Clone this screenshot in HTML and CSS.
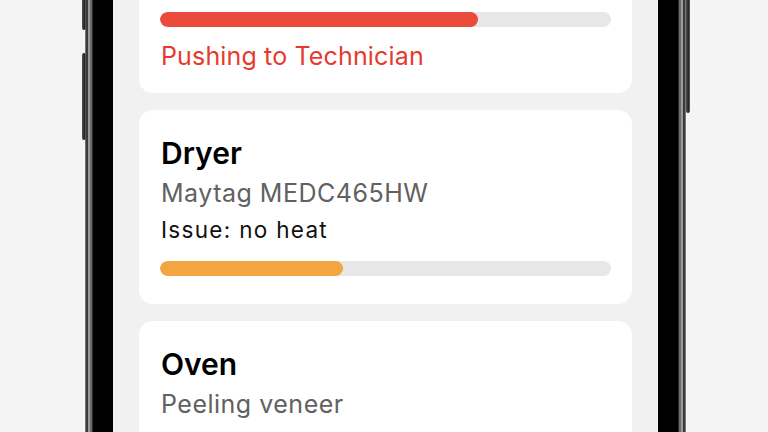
FILE: index.html
```html
<!DOCTYPE html>
<html lang="en">
<head>
<meta charset="utf-8">
<title>Repairs</title>
<link rel="stylesheet" href="styles.css">
</head>
<body>
<div class="stage">
  <div class="phone">
    <span class="btn btn-l1"></span>
    <span class="btn btn-l2"></span>
    <span class="btn btn-r"></span>
    <div class="screen">
      <div class="card card-top">
        <div class="track track-first"><div class="fill fill-red" style="width:70.5%"></div></div>
        <div class="status">Pushing to Technician</div>
      </div>
      <div class="card">
        <div class="title">Dryer</div>
        <div class="sub">Maytag MEDC465HW</div>
        <div class="issue">Issue: no heat</div>
        <div class="track"><div class="fill fill-orange" style="width:40.6%"></div></div>
      </div>
      <div class="card">
        <div class="title">Oven</div>
        <div class="sub">Peeling veneer</div>
      </div>
    </div>
  </div>
</div>
</body>
</html>
```
FILE: styles.css
```css
html, body {
  margin: 0;
  padding: 0;
}
body {
  width: 768px;
  height: 432px;
  overflow: hidden;
  background: #f4f4f4;
  font-family: Inter, "Liberation Sans", sans-serif;
}
.stage {
  display: flex;
  padding-left: 93px;
}
.phone {
  position: relative;
  width: 545px;
  height: 900px;
  margin-top: -200px;
  border: 20px solid #000;
  border-radius: 70px;
  background: #f1f1f1;
  box-shadow: 0 0 0 1px #2a2a2a, 0 0 0 3px #6c6c6c, 0 0 0 5px #9a9a9a, 0 0 0 7px #3a3a3a, 0 0 0 8px #777;
}
.btn {
  position: absolute;
  width: 4px;
  background: linear-gradient(90deg, #555, #222 60%, #666);
  border-radius: 2px;
}
.btn-l1 { left: -31px; top: 150px; height: 60px; }
.btn-l2 { left: -31px; top: 233px; height: 87px; }
.btn-r { right: -32px; top: 120px; height: 173px; }
.screen {
  display: flex;
  flex-direction: column;
  gap: 17px;
  padding: 150px 26px 0;
}
.card {
  background: #fff;
  border-radius: 14px;
  padding: 25px 21px 28px 22px;
  min-height: 140px;
}
.card-top {
  padding-top: 42px;
  padding-bottom: 22px;
  min-height: 0;
}
.title {
  font-size: 30px;
  line-height: 36px;
  font-weight: 600;
  color: #000;
}
.sub {
  margin-top: 7px;
  font-size: 25px;
  line-height: 30px;
  letter-spacing: 0.5px;
  color: #616161;
}
.issue {
  margin-top: 7px;
  font-size: 22.5px;
  line-height: 30px;
  letter-spacing: 1.3px;
  color: #111;
}
.track {
  margin-top: 16px;
  margin-left: -1px;
  height: 15px;
  border-radius: 8px;
  background: #e7e7e7;
  overflow: hidden;
}
.track-first {
  margin-top: 0;
}
.fill {
  height: 100%;
  border-radius: 8px;
}
.fill-red { background: #ea4b3b; }
.fill-orange { background: #f2a541; }
.status {
  margin-top: 14px;
  font-size: 25px;
  line-height: 30px;
  letter-spacing: 0.15px;
  color: #e8392e;
}
```
